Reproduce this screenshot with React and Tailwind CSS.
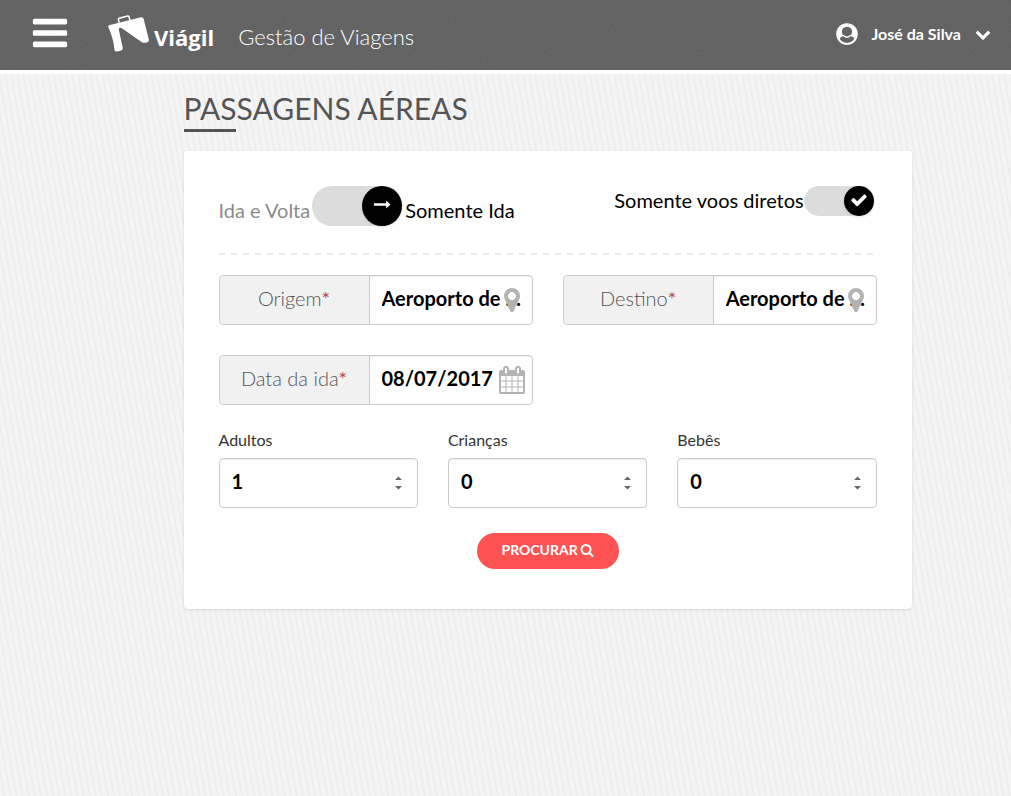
import React, { useState } from 'react';

// Font Awesome 4 glyphs, all on a 1792 grid
const icons = {
  bars: 'M1664 1344v128q0 26-19 45t-45 19H192q-26 0-45-19t-19-45v-128q0-26 19-45t45-19h1408q26 0 45 19t19 45zm0-512v128q0 26-19 45t-45 19H192q-26 0-45-19t-19-45V832q0-26 19-45t45-19h1408q26 0 45 19t19 45zm0-512v128q0 26-19 45t-45 19H192q-26 0-45-19t-19-45V320q0-26 19-45t45-19h1408q26 0 45 19t19 45z',
  calendar: 'M192 1664h288v-288H192v288zm352 0h320v-288H544v288zm-352-352h288V992H192v320zm352 0h320V992H544v320zM192 928h288V640H192v288zm736 736h320v-288H928v288zM544 928h320V640H544v288zm768 736h288v-288h-288v288zM928 1312h320V992H928v320zM576 448V160q0-13-9.5-22.5T544 128h-64q-13 0-22.5 9.5T448 160v288q0 13 9.5 22.5T480 480h64q13 0 22.5-9.5T576 448zm736 864h288V992h-288v320zM928 928h320V640H928v288zm384 0h288V640h-288v288zm32-480V160q0-13-9.5-22.5T1312 128h-64q-13 0-22.5 9.5T1216 160v288q0 13 9.5 22.5T1248 480h64q13 0 22.5-9.5T1344 448zm384-64v1280q0 52-38 90t-90 38H192q-52 0-90-38t-38-90V384q0-52 38-90t90-38h128v-96q0-66 47-113t113-47h64q66 0 113 47t47 113v96h384v-96q0-66 47-113t113-47h64q66 0 113 47t47 113v96h128q52 0 90 38t38 90z',
  marker: 'M1152 640q0-106-75-181t-181-75-181 75-75 181 75 181 181 75 181-75 75-181zm256 0q0 109-33 179l-364 774q-16 33-47.5 52t-67.500 19-67.500-19-46.500-52L417 819q-33-70-33-179 0-212 150-362t362-150 362 150 150 362z',
  search: 'M1216 832q0-185-131.500-316.500T768 384 451.500 515.500 320 832t131.500 316.500T768 1280t316.500-131.500T1216 832zm512 832q0 52-38 90t-90 38q-54 0-90-38l-343-342q-179 124-399 124-143 0-273.500-55.500t-225-150-150-225T64 832t55.500-273.500 150-225 225-150T768 128t273.500 55.500 225 150 150 225T1472 832q0 220-124 399l343 343q37 37 37 90z',
  check: 'M1671 566q0 40-28 68l-724 724-136 136q-28 28-68 28t-68-28l-136-136-362-362q-28-28-28-68t28-68l136-136q28-28 68-28t68 28l294 295 656-657q28-28 68-28t68 28l136 136q28 28 28 68z',
  chevron: 'M1683 808l-742 741q-19 19-45 19t-45-19L109 808q-19-19-19-45.500t19-45.500l166-165q19-19 45-19t45 19l531 531 531-531q19-19 45-19t45 19l166 165q19 19 19 45.500t-19 45.500z',
  arrow: 'M1728 893q0 14-10 24l-384 354q-16 14-35 6-19-9-19-29v-224H32q-14 0-23-9t-9-23V800q0-14 9-23t23-9h1248V544q0-21 19-29t35 5l384 350q10 10 10 23z',
};

const Icon = ({ name, className }) => (
  <svg className={className} viewBox="0 0 1792 1792" fill="currentColor" aria-hidden="true">
    <path d={icons[name]} />
  </svg>
);

const Logo = () => (
  <a href="#" className="flex items-end text-white" aria-label="Viágil">
    <svg className="h-[38px] w-[43px]" viewBox="0 0 43 38" fill="currentColor" aria-hidden="true">
      <path d="M1.500 12.500Q.3 11 2 10.200L34 2.200q2-.4 2.600 1.500L41.800 24.500q.5 2-1.500 2.700-2.500 1.200-5 .2L14.500 13q-3-1-2.600 2L15.800 33q.2 1.400-1.200 2.200-3 1.400-5.700 1.200-1.300-.2-1.500-1.600Q6.600 24 1.500 12.500z" />
      <path d="M12.200 7.800L11.400 4.600q-.2-1 .8-1.400L20.500 1q1.200-.2 1.500.8l.9 3.400" fill="none" stroke="currentColor" strokeWidth="1.500" />
    </svg>
    <span className="mb-1 ml-1 font-['Open_Sans'] text-[22px] leading-6 font-bold">Viágil</span>
  </a>
);

const UserIcon = () => (
  <svg className="size-[22px]" viewBox="0 0 22 22" fill="none" aria-hidden="true">
    <circle cx="11" cy="11" r="9.900" stroke="white" strokeWidth="1.800" />
    <path
      fill="white"
      fillRule="evenodd"
      d="M11 1a10 10 0 0 0-8 16q1.200-3.400 4.600-4.200Q5.900 11.200 5.900 8.600 6.300 3.900 11 3.700q4.700.2 5.100 4.900 0 2.600-1.700 4.200 3.400.8 4.600 4.200A10 10 0 0 0 11 1z"
    />
    <path d="M7.200 12.300q3.800 3.800 7.600 0" stroke="white" strokeWidth="1.500" />
  </svg>
);

const Header = () => (
  <header className="relative border-b-4 border-white bg-[#5f5f60]">
    <svg className="absolute inset-0 size-full opacity-10" aria-hidden="true">
      <filter id="grain">
        <feTurbulence type="fractalNoise" baseFrequency="0.6" numOctaves="2" />
        <feColorMatrix type="saturate" values="0" />
      </filter>
      <rect width="100%" height="100%" filter="url(#grain)" />
    </svg>
    <div className="relative flex h-[70px] items-center pb-0.5 text-white">
      <button type="button" aria-label="Menu" className="ml-[30px] pb-0.5">
        <Icon name="bars" className="size-10" />
      </button>
      <div className="ml-[37px]">
        <Logo />
      </div>
      <span className="ml-6 pt-1 text-[22px] font-light">Gestão de Viagens</span>
      <button type="button" className="mr-5 ml-auto flex items-center font-bold">
        <UserIcon />
        <span className="ml-[13px] text-base">José da Silva</span>
        <Icon name="chevron" className="ml-[14px] size-4" />
      </button>
    </div>
  </header>
);

const TripSwitch = ({ checked, onChange }) => (
  <label className="flex cursor-pointer text-xl leading-[48px]">
    <span className={checked ? 'text-[#8c8c8c]' : 'text-black'}>Ida e Volta</span>
    <input type="checkbox" className="peer sr-only" checked={checked} onChange={onChange} />
    <span className={`ml-0.5 flex h-10 w-[90px] rounded-full bg-[#dcdcdc] ${checked ? 'justify-end' : 'justify-start'}`}>
      <span className="flex size-10 items-center justify-center rounded-full bg-black pb-1 text-white shadow">
        <Icon name="arrow" className="size-[17px]" />
      </span>
    </span>
    <span className={checked ? 'ml-[3px] text-black' : 'ml-[3px] text-[#8c8c8c]'}>Somente Ida</span>
  </label>
);

const DirectSwitch = ({ checked, onChange }) => (
  <label className="mr-[3px] flex cursor-pointer text-xl leading-7 text-black">
    Somente voos diretos
    <input type="checkbox" className="peer sr-only" checked={checked} onChange={onChange} />
    <span className={`flex h-[30px] w-[70px] rounded-full bg-[#dcdcdc] ${checked ? 'justify-end' : 'justify-start'}`}>
      <span className="flex size-[30px] items-center justify-center rounded-full bg-black pb-0.5 text-white shadow">
        <Icon name="check" className="size-[18px]" />
      </span>
    </span>
  </label>
);

const Field = ({ id, label, value, icon }) => (
  <div className="relative flex h-[50px] overflow-hidden rounded border border-[#cccccc] bg-white">
    <label htmlFor={id} className="w-[150px] shrink-0 border-r border-[#cccccc] bg-[#f1f1f1] text-center text-xl leading-[44px] font-light text-[#555555]">
      {label}
      <span className="font-normal text-[#b94a48]">*</span>
    </label>
    <input
      id={id}
      type="text"
      defaultValue={value}
      className="min-w-0 flex-1 pr-2 pb-1 pl-3 text-xl font-bold text-ellipsis text-black shadow-[inset_0_1px_1px_rgba(0,0,0,0.075)] outline-none"
    />
    <Icon name={icon} className="absolute top-2.5 right-[6px] size-7 text-[#b3b3b3]" />
  </div>
);

const Passengers = ({ id, label, value }) => {
  const [count, setCount] = useState(value);
  return (
    <div>
      <label htmlFor={id} className="block text-base leading-6 text-[#333333]">{label}</label>
      <div className="relative mt-1.5">
        <select
          id={id}
          value={count}
          onChange={(e) => setCount(Number(e.target.value))}
          className="h-[50px] w-full appearance-none rounded border border-[#cccccc] bg-white px-3 pb-1 text-xl font-bold text-black shadow-[inset_0_1px_1px_rgba(0,0,0,0.075)]"
        >
          {[0, 1, 2, 3, 4, 5, 6, 7, 8, 9].map((n) => (
            <option key={n} value={n}>{n}</option>
          ))}
        </select>
        <svg className="pointer-events-none absolute top-[18px] right-4 h-[14px] w-[7px] fill-[#666666]" viewBox="0 0 7 14" aria-hidden="true">
          <path d="M0 4L3.500 .6 7 4zM0 10l3.500 3.400L7 10z" />
        </svg>
      </div>
    </div>
  );
};

export default function App() {
  const [oneWay, setOneWay] = useState(true);
  const [direct, setDirect] = useState(true);

  return (
    <div className="min-h-screen bg-[#f3f3f3] bg-[repeating-linear-gradient(80deg,#f4f4f4_0px,#f4f4f4_3px,#ececec_4px,#f0f0f0_5px,#f4f4f4_6px)] font-['Lato',sans-serif]">
      <Header />
      <main className="ml-[calc(100%/6)] w-3/4 px-[15px]">
        <h1 className="pt-3 text-3xl leading-[44px] text-[#555555] uppercase">Passagens Aéreas</h1>
        <div className="-mt-px h-[3px] w-[52px] bg-[#555555]" />

        <form className="mt-[19px] rounded bg-white px-[35px] pt-[35px] pb-10 shadow-sm" onSubmit={(e) => e.preventDefault()}>
          <div className="flex h-[67px] items-start justify-between">
            <TripSwitch checked={oneWay} onChange={() => setOneWay(!oneWay)} />
            <DirectSwitch checked={direct} onChange={() => setDirect(!direct)} />
          </div>
          <div className="h-0.5 bg-[repeating-linear-gradient(90deg,#ebebeb_0px,#ebebeb_6px,transparent_6px,transparent_12px)]" />

          <div className="mt-5 grid grid-cols-2 gap-[30px]">
            <Field id="origem" label="Origem" value="Aeroporto de Congonhas" icon="marker" />
            <Field id="destino" label="Destino" value="Aeroporto de Brasília" icon="marker" />
            <Field id="ida" label="Data da ida" value="08/07/2017" icon="calendar" />
          </div>

          <div className="mt-[23px] grid grid-cols-3 gap-[30px]">
            <Passengers id="adultos" label="Adultos" value={1} />
            <Passengers id="criancas" label="Crianças" value={0} />
            <Passengers id="bebes" label="Bebês" value={0} />
          </div>

          <div className="mt-[25px] flex justify-center">
            <button type="submit" className="flex h-9 items-center gap-0.5 rounded-full bg-[#ff5252] px-[25px] pb-0.5 text-sm font-bold text-white uppercase">
              Procurar
              <Icon name="search" className="size-[14px]" />
            </button>
          </div>
        </form>
      </main>
    </div>
  );
}
